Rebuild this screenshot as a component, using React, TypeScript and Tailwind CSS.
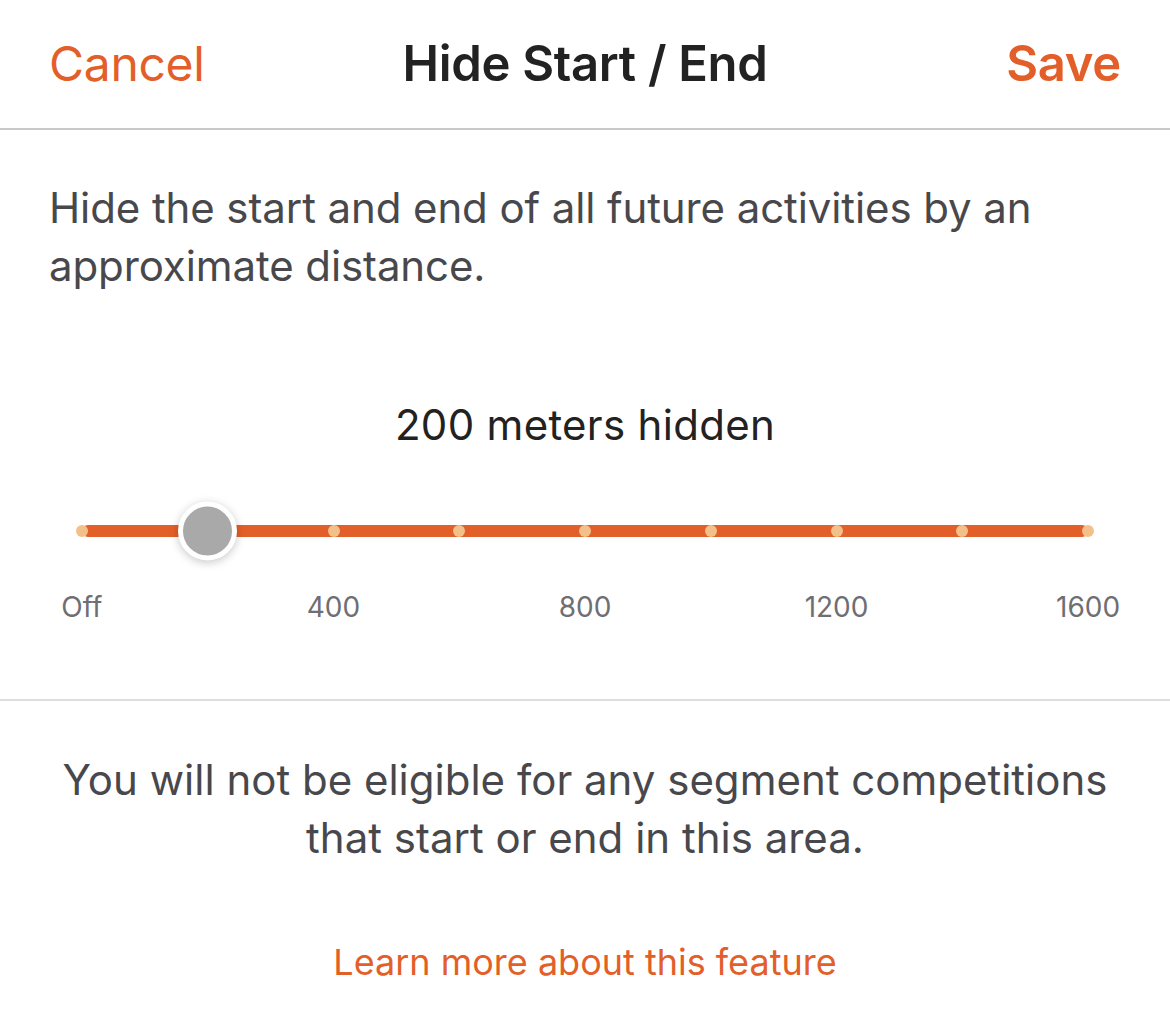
import React from "react";

const ticks = [0, 1, 2, 3, 4, 5, 6, 7, 8];
const labels = ["Off", "", "400", "", "800", "", "1200", "", "1600"];

function Slider({ value }: { value: number }) {
  const step = (1088 - 82) / 8;
  return (
    <div className="relative pt-[71px]">
      <div className="relative ml-[82px] w-[1006px] h-[12px] rounded-full bg-[#e35f2a]">
        <div className="absolute inset-y-0 -left-[6px] -right-[6px] flex justify-between">
          {ticks.map((t) => (
            <div key={t} className="w-[12px] h-[12px] rounded-full bg-[#f4c08a]" />
          ))}
        </div>
        <div
          className="absolute top-1/2 -translate-y-1/2 w-[59px] h-[59px] rounded-full bg-[#a9a9a9] border-[5px] border-white shadow-[0_2px_10px_rgba(0,0,0,0.22)]"
          style={{ left: value * step - 29.5 }}
        />
      </div>
      <div className="grid grid-cols-9 ml-[19px] w-[1132px] mt-[53px]">
        {labels.map((l, i) => (
          <div key={i} className="text-center text-[28px] leading-[34px] text-[#6e6e73]">
            {l}
          </div>
        ))}
      </div>
    </div>
  );
}

export default function App() {
  return (
    <div
      className="w-[1170px] h-[1017px] bg-white overflow-hidden"
      style={{ fontFamily: "Inter, 'Noto Sans', sans-serif" }}
    >
      <div className="h-[130px] border-b-2 border-[#c8c8c8] grid grid-cols-[1fr_auto_1fr] items-center px-[49px]">
        <span className="text-[48px] text-[#e35f2a] tracking-[-0.3px] justify-self-start">Cancel</span>
        <span className="text-[49px] font-semibold text-[#222222] tracking-[-0.3px]">Hide Start / End</span>
        <span className="text-[49px] font-semibold text-[#e35f2a] tracking-[-0.3px] justify-self-end">Save</span>
      </div>
      <div className="px-[49px] pt-[49px] text-[42px] leading-[58px] text-[#48484c] tracking-[-0.1px]">
        Hide the start and end of all future activities by an approximate distance.
      </div>
      <div className="text-center text-[42px] text-[#222222] mt-[101px] leading-[58px] tracking-[0.3px]">
        200 meters hidden
      </div>
      <Slider value={1} />
      <div className="mt-[75px] border-t-2 border-[#dddddd]" />
      <div className="text-center text-[42px] leading-[58px] text-[#48484c] pt-[50px]">
        You will not be eligible for any segment competitions
        <br />
        that start or end in this area.
      </div>
      <div className="text-center text-[36px] leading-[44px] text-[#e35f2a] mt-[73px]">
        Learn more about this feature
      </div>
    </div>
  );
}
